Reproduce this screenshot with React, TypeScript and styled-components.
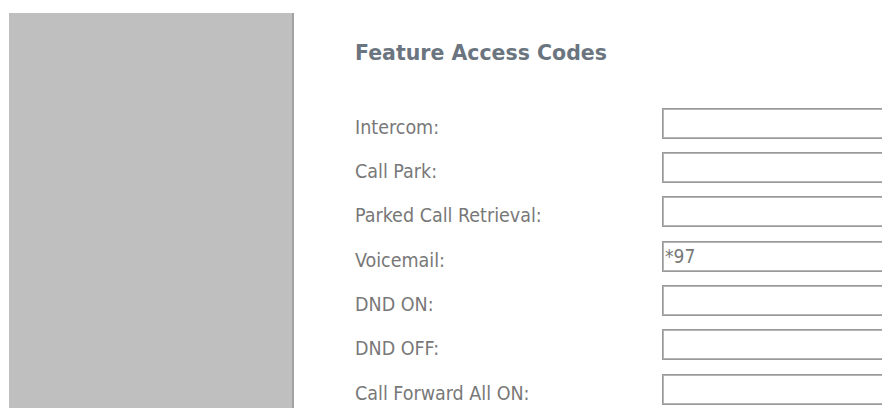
import React from "react";
import styled, { createGlobalStyle } from "styled-components";

const GlobalStyle = createGlobalStyle`
  html, body {
    margin: 0;
    padding: 0;
    background: #ffffff;
    overflow: hidden;
  }
  body {
    font-family: "DejaVu Sans Condensed", "DejaVu Sans", sans-serif;
  }
`;

const Page = styled.div`
  display: flex;
  align-items: stretch;
  padding: 13px 0 0 9px;
  height: 408px;
  box-sizing: border-box;
`;

const Sidebar = styled.aside`
  flex: 0 0 283px;
  background: #bfbfbf;
  border-right: 2px solid #a2a2a2;
`;

const Main = styled.main`
  flex: 1;
  min-width: 0;
  padding: 28px 0 0 61px;
  overflow: hidden;
`;

const Heading = styled.h2`
  margin: 0;
  font-family: "DejaVu Sans", sans-serif;
  font-weight: bold;
  font-size: 20.5px;
  line-height: 24px;
  color: #6b7580;
`;

const Form = styled.div`
  display: grid;
  grid-template-columns: 307px 260px;
  grid-auto-rows: 44.4px;
  margin-top: 42.5px;
`;

const Label = styled.label`
  display: flex;
  align-items: flex-start;
  padding-top: 9px;
  font-size: 19.5px;
  line-height: 22px;
  color: #787878;
  white-space: nowrap;
`;

const Field = styled.input`
  box-sizing: border-box;
  width: 260px;
  height: 31px;
  margin: 0;
  padding: 0 0 0 2px;
  border: 1px solid #999999;
  box-shadow: inset 0 0 0 1px #b4b4b4;
  background: #ffffff;
  font-family: "DejaVu Sans Condensed", "DejaVu Sans", sans-serif;
  font-size: 19px;
  color: #777777;
  outline: none;
`;

const codes: { label: string; value: string }[] = [
  { label: "Intercom:", value: "" },
  { label: "Call Park:", value: "" },
  { label: "Parked Call Retrieval:", value: "" },
  { label: "Voicemail:", value: "*97" },
  { label: "DND ON:", value: "" },
  { label: "DND OFF:", value: "" },
  { label: "Call Forward All ON:", value: "" },
];

export default function App() {
  return (
    <>
      <GlobalStyle />
      <Page>
        <Sidebar />
        <Main>
          <Heading>Feature Access Codes</Heading>
          <Form>
            {codes.map((c) => (
              <React.Fragment key={c.label}>
                <Label>{c.label}</Label>
                <Field type="text" defaultValue={c.value} />
              </React.Fragment>
            ))}
          </Form>
        </Main>
      </Page>
    </>
  );
}
